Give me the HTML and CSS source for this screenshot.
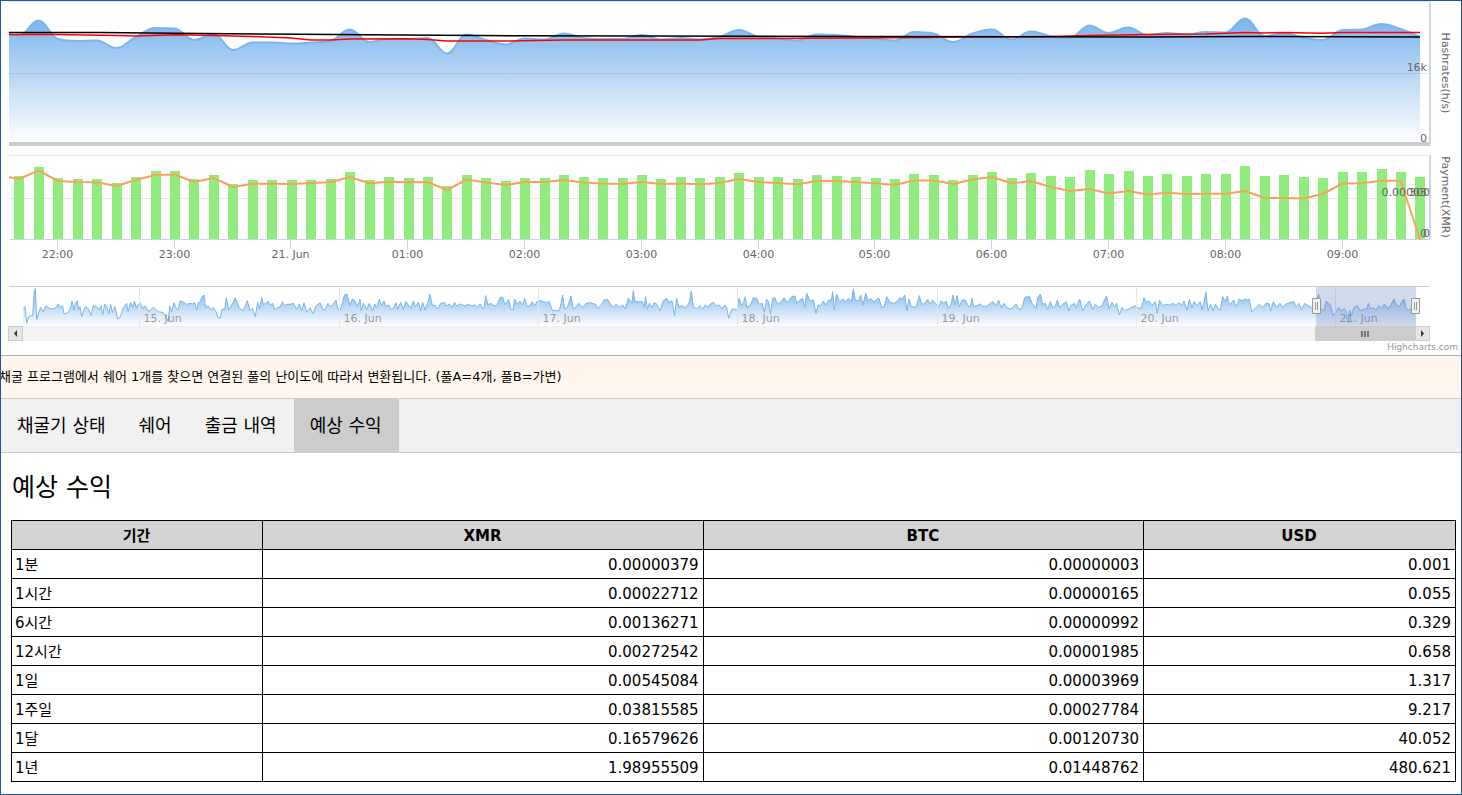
FILE: index.html
```html
<!DOCTYPE html>
<html lang="ko">
<head>
<meta charset="utf-8">
<title>예상 수익</title>
<link rel="stylesheet" href="styles.css">
</head>
<body>
<main class="page">
  <section class="chart">
    <svg class="plot" viewBox="1 1 1460 325" role="img" aria-label="Hashrates and payment">
      <defs>
        <linearGradient id="fade" x1="0" y1="0" x2="0" y2="1">
          <stop offset="0" stop-color="#7cb5ec"/>
          <stop offset="1" stop-color="#7cb5ec" stop-opacity="0"/>
        </linearGradient>
        <clipPath id="pane"><rect x="9" y="0" width="1421" height="241"/></clipPath>
      </defs>
      <path class="grid" d="M9 1.5H1430M9 73.5H1430M9 155.5H1430M9 198.5H1430"/>
      <g clip-path="url(#pane)">
        <path id="area" fill="url(#fade)"/>
        <path id="area-line" class="line blue"/>
        <path class="grid faint" d="M9 73.5H1420"/>
        <path id="avg-short" class="line red"/>
        <path id="avg-long" class="line black"/>
        <g id="bars" class="bars"></g>
      </g>
      <path class="separator" d="M9 144H1430"/>
      <path class="axis" d="M9 239.5H1430"/>
      <path class="axis thick" d="M1430 2V144M1430 155V239"/>
      <g clip-path="url(#pane)"><path id="payment" class="line orange"/></g>
      <g id="ticks" class="label middle"></g>
      <g class="label end">
        <text x="1427" y="71">16k</text>
        <text x="1427" y="142">0</text>
        <text x="1427" y="196">0.00003</text>
        <text x="1430" y="196">300</text>
        <text x="1427" y="237">0</text>
        <text x="1430" y="237">0</text>
      </g>
      <g class="label middle">
        <text transform="translate(1442 73) rotate(90)">Hashrates(h/s)</text>
        <text transform="translate(1442 197) rotate(90)">Payment(XMR)</text>
      </g>
      <path id="nav-area" fill="url(#fade)"/>
      <path id="nav-line" class="line thin"/>
      <g id="nav-days" class="label day"></g>
      <path class="nav-edge" d="M9 286.5H1430"/>
      <rect class="mask" x="1316" y="287" width="100" height="39"/>
      <g class="handle">
        <path d="M1312.5 298.5h8v15h-8zM1411.5 298.5h8v15h-8z"/>
        <path d="M1315.5 302v8M1317.5 302v8M1414.5 302v8M1416.5 302v8"/>
      </g>
    </svg>
    <div class="scrollbar">
      <button class="arrow" type="button" aria-label="Scroll left"><svg width="5" height="7" viewBox="0 0 5 7"><path d="M4 0v7L1 3.5z"/></svg></button>
      <div class="track"><div class="thumb"><i></i><i></i><i></i></div></div>
      <button class="arrow" type="button" aria-label="Scroll right"><svg width="5" height="7" viewBox="0 0 5 7"><path d="M1 0v7l3-3.5z"/></svg></button>
    </div>
    <a class="credits" href="#">Highcharts.com</a>
  </section>
  <p class="notice">채굴 프로그램에서 쉐어 1개를 찾으면 연결된 풀의 난이도에 따라서 변환됩니다. (풀A=4개, 풀B=가변)</p>
  <nav class="tabs">
    <button type="button">채굴기 상태</button>
    <button type="button">쉐어</button>
    <button type="button">출금 내역</button>
    <button type="button" class="active">예상 수익</button>
  </nav>
  <section class="content">
    <h3>예상 수익</h3>
    <table>
      <colgroup><col class="c-period"><col class="c-coin"><col class="c-coin"><col class="c-usd"></colgroup>
      <thead><tr><th>기간</th><th>XMR</th><th>BTC</th><th>USD</th></tr></thead>
      <tbody>
        <tr><td>1분</td><td>0.00000379</td><td>0.00000003</td><td>0.001</td></tr>
        <tr><td>1시간</td><td>0.00022712</td><td>0.00000165</td><td>0.055</td></tr>
        <tr><td>6시간</td><td>0.00136271</td><td>0.00000992</td><td>0.329</td></tr>
        <tr><td>12시간</td><td>0.00272542</td><td>0.00001985</td><td>0.658</td></tr>
        <tr><td>1일</td><td>0.00545084</td><td>0.00003969</td><td>1.317</td></tr>
        <tr><td>1주일</td><td>0.03815585</td><td>0.00027784</td><td>9.217</td></tr>
        <tr><td>1달</td><td>0.16579626</td><td>0.00120730</td><td>40.052</td></tr>
        <tr><td>1년</td><td>1.98955509</td><td>0.01448762</td><td>480.621</td></tr>
      </tbody>
    </table>
  </section>
</main>
<script src="chart.js"></script>
</body>
</html>
```
FILE: styles.css
```css
* { box-sizing: border-box; }

body {
  margin: 0;
  color: #000;
  font-family: "DejaVu Sans", "Noto Sans CJK KR", sans-serif;
  font-size: 15px;
}

.page {
  min-height: 100vh;
  border: 1px solid #2155a0;
  overflow: hidden;
}

.plot { display: block; width: 100%; height: auto; }
.grid { fill: none; stroke: #e6e6e6; }
.faint { stroke: #a5c5e6; }
.line { fill: none; stroke-width: 2; stroke-linejoin: round; }
.blue { stroke: #7cb5ec; }
.red { stroke: #f00; stroke-width: 1.5; }
.black { stroke: #000; stroke-width: 1.5; }
.orange { stroke: #f7a35c; }
.thin { stroke: #7cb5ec; stroke-width: 1; }
.bars { fill: #90ed7d; }
.separator { stroke: #ccc; stroke-width: 4; }
.axis { stroke: #ccd6eb; fill: none; }
.thick { stroke-width: 2; }
.nav-edge { stroke: #ccc; }
.mask { fill: #6685c2; fill-opacity: 0.3; }
.handle { fill: #f2f2f2; stroke: #999; }

.label { font-size: 11px; fill: #666; }
.middle { text-anchor: middle; }
.end { text-anchor: end; }
.day { fill: #999; }

.scrollbar {
  display: flex;
  height: 15px;
  margin: 0 31px 0 7px;
  background: #f2f2f2;
}

.arrow {
  flex: none;
  display: flex;
  align-items: center;
  justify-content: center;
  width: 15px;
  padding: 0;
  border: 1px solid #ccc;
  background: #e6e6e6;
}

.arrow path { fill: #333; }
.track { flex: 1; display: flex; justify-content: flex-end; }

.thumb {
  display: flex;
  align-items: center;
  justify-content: center;
  gap: 1px;
  width: 7.2%;
  background: #ccc;
}

.thumb i { width: 2px; height: 6px; background: #777; }

.credits {
  display: block;
  height: 14px;
  padding-right: 3px;
  color: #999;
  font-size: 9px;
  line-height: 12px;
  text-align: right;
  text-decoration: none;
}

.notice {
  margin: 0 0 0 -8px;
  padding: 0 6px;
  border-top: 1px solid #aaa;
  background: #fff7ed;
  font-size: 13px;
  line-height: 42px;
  white-space: nowrap;
}

.tabs {
  display: flex;
  border: solid #ccc;
  border-width: 1px 0;
  background: #f1f1f1;
}

.tabs button {
  padding: 0 17px 0 16px;
  border: 0;
  background: none;
  color: #000;
  font: 18px/53px "DejaVu Sans", "Noto Sans CJK KR", sans-serif;
}

.tabs .active { background: #ccc; }

.content { padding: 0 5px 0 10px; }

h3 {
  margin: 17px 0 15px 1px;
  font-size: 25px;
  font-weight: 400;
  line-height: 35px;
}

table {
  width: 100%;
  border-collapse: collapse;
  table-layout: fixed;
}

.c-period { width: 17.4%; }
.c-coin { width: 30.5%; }

th, td {
  height: 29px;
  padding: 2px 4px 0 3px;
  border: 1px solid #000;
  line-height: 26px;
  text-align: right;
}

th { background: #d3d3d3; text-align: center; }
td:first-child { text-align: left; }
```
FILE: chart.js
```js
const START = 19;
const STEP = 19.46;
const hash = [35.5,20.5,39,41,40.5,48,37,28,28.5,40,34,50,42.5,42.5,43.5,42.5,41,29.5,42,39,39,38,53.5,34.5,40,44.5,38.5,39.5,33.5,38,39,39,35,39.5,38,39.5,37,30,37,38.5,40.5,34.5,35,37,38.5,40.5,32,33.5,42,33.5,29.5,39.5,31.5,36,38,25.5,33,27.5,35,33,34.5,32,32.5,18.5,36,33.5,37.5,40,30,29.5,24,29,37];
const bars = [176,167,178,179,179,183,177,171,171,179,175,184,180,180,180,180,179,172,180,177,178,177,186,175,178,181,178,178,175,177,178,178,175,179,177,178,177,173,177,177,179,175,176,177,178,179,174,175,180,175,172,178,173,176,177,170,174,171,176,174,176,174,174,166,176,175,177,178,172,172,169,172,177];
const pay = [179,170.5,181,182,182.3,186,180,175,174.5,182,178,187,183.7,183.7,184,183,182.3,177,183.3,181.7,182.3,182,190,179.5,182.5,185,182,182,180,182.5,183.5,184,182,184,183.5,184.3,183,179,182,183,184.3,181,181,182,183.3,185,180.5,180.5,184,179.5,177,183.2,181,187,191,189,193.5,191,194.5,192.7,194,193.7,193.7,191,198,198,198.5,194,183.5,183.2,180.7,180.7,240];
const shortAvg = [[9,34.5],[58,34.5],[116,35.5],[136,36],[175,34.8],[214,35.5],[252,36.5],[291,38],[311,40],[330,40],[350,39],[408,38.7],[428,39.5],[447,41],[505,41],[564,40],[700,40],[719,38.6],[860,38],[970,37],[1050,36.5],[1089,35.6],[1147,34.5],[1206,34],[1245,32.6],[1264,33],[1284,32.5],[1322,33.3],[1342,32.5],[1420,32.4]];
const longAvg = [[9,32.5],[100,32.5],[175,33.3],[300,34.3],[400,35],[480,35.6],[640,36],[860,36.6],[1147,37],[1245,36.5],[1420,37]];

// Overview samples: x origin followed by x,y pairs in thirds of a unit.
const nav = [
  [0, "70,100 75,95 80,145 86,125 92,122 98,122 102,60 106,40 110,133 117,110 122,97 129,110 137,93 143,95 150,102 165,100 175,87 180,97 188,93 192,117 205,112 212,97 216,78 222,105 226,85 232,77 236,105 240,95 245,125 252,103 258,94 266,103 273,122 280,92 290,95 298,105 303,92 308,120 314,88 320,92 326,117 332,88 337,112 345,95 353,132 360,127 370,98 380,85 384,110 392,82 398,97 403,78 409,98 420,83 428,100 436,93 446,110 460,97 475,110 490,113 500,130 505,140 509,93 515,110 522,83 527,97 534,105 540,78 548,80 560,88 570,85 580,87 584,82 590,105 595,82 600,82 606,65 612,60 617,97 625,93 632,105 640,97 648,110 654,128 662,128 666,102 674,105 679,68 686,105 700,82 705,68 712,82 718,100 730,107 742,77 750,107 758,100 766,125 773,82 779,102 785,68 790,88 798,85 804,78 810,90 818,85 824,105 832,97 840,97 847,80 853,92 860,88 870,88 880,85 890,103 898,87 905,108 912,83 920,112 930,98 940,117 948,92 960,83 970,105 977,103 984,85 990,95 1000,87 1008,75 1013,100 1020,107 1028,82 1033,60 1041,57 1050,92 1057,72 1065,78 1072,95 1080,73 1084,108 1090,85 1100,105 1108,85 1118,108 1124,87 1130,97 1138,72 1144,92 1152,78 1158,95 1166,90 1172,103 1180,100 1188,83 1193,103 1202,82 1210,103 1218,80 1226,92 1232,100 1240,78 1246,95 1255,82 1262,107 1268,82 1275,105 1283,85 1290,58 1297,92 1305,90 1313,102 1322,85 1334,83 1340,93 1348,87 1356,98 1364,82 1370,93 1382,87 1395,93 1405,88 1416,93 1425,90 1433,97 1440,87"],
  [1440, "8,100 12,100 17,62 24,90 32,85 42,92 50,92 60,68 68,66 74,88 80,83 86,73 92,103 99,105 104,73 112,88 120,78 128,90 134,70 142,95 150,92 156,80 164,92 172,78 182,77 190,80 200,83 208,80 216,105 225,107 238,107 242,90 248,60 254,102 262,97 273,63 280,103 290,93 296,85 308,98 318,85 330,83 345,87 355,100 362,92 372,75 382,73 390,85 400,98 408,88 418,97 428,90 436,102 445,70 451,78 456,85 460,47 465,80 475,80 487,80 492,97 497,65 502,103 508,85 516,98 522,83 530,87 540,108 550,77 560,70 568,82 576,77 584,122 590,70 597,97 606,92 615,98 622,92 628,82 634,47 640,95 650,102 660,92 668,103 675,90 684,97 690,88 700,82 710,92 718,90 726,102 734,90 740,97 746,130 755,103 765,102 772,105 777,70 785,92 790,83 796,65 800,97 810,92 820,68 830,70 838,88 847,85 853,112 860,73 866,80 871,118 878,70 885,68 892,88 902,82 912,68 922,83 935,65 945,63 950,85 960,75 968,70 974,97 980,55 990,78 1000,75 1008,115 1014,90 1022,92 1030,78 1038,90 1046,75 1054,75 1058,50 1063,105 1070,57 1078,80 1090,72 1098,80 1105,70 1114,80 1120,42 1126,75 1136,77 1142,60 1149,90 1157,55 1165,78 1172,70 1182,82 1190,73 1197,70 1205,97 1212,97 1220,65 1230,82 1240,85 1250,80 1260,68 1268,72 1274,60 1281,107 1287,72 1294,95 1300,95 1308,97 1318,62 1325,88 1335,85 1343,72 1350,87 1358,75 1366,85 1375,97 1383,78 1392,85 1398,78 1405,100 1413,90 1419,60 1426,90 1431,62 1438,95 1446,75 1456,75 1464,92 1471,97"],
  [2916, "0,70 5,95 15,92 25,87 33,95 45,93 55,85 63,80 72,93 80,75 87,98 96,85 103,95 112,102 122,98 132,87 140,103 150,100 158,68 166,65 173,65 180,85 192,100 197,68 205,57 212,88 220,85 227,103 235,80 242,98 250,95 256,75 263,98 272,88 283,80 290,108 298,90 307,85 313,98 323,72 332,108 342,90 352,78 362,103 370,88 380,97 388,95 395,80 404,63 411,102 420,82 428,95 434,85 442,120 450,97 460,107 470,102 480,97 490,92 500,100 508,100 516,68 523,82 530,77 540,90 550,80 556,115 562,75 572,92 582,88 592,90 602,85 612,92 620,83 630,90 636,78 645,105 652,73 660,98 666,80 675,92 685,80 690,105 696,80 702,52 708,108 716,88 723,108 730,88 738,100 745,105 752,65 760,80 766,63 772,90 785,75 793,95 802,72 810,78 818,72 826,75 832,72 839,110 850,100 862,88 872,97 882,85 890,85 896,108 904,80 914,97 924,85 932,98 940,88 952,83 965,80 972,95 982,85 988,105 998,85 1008,92 1018,97 1028,95 1034,80 1040,57 1046,100 1056,108 1063,78 1068,85 1075,90 1083,122 1092,110 1100,97 1108,108 1116,100 1122,108 1127,142 1133,105 1138,122 1146,97 1156,92 1166,108 1174,102 1184,103 1189,85 1196,102 1204,98 1212,107 1220,92 1228,100 1236,88 1242,92 1248,102 1256,90 1266,72 1273,90 1282,95 1290,78 1296,72 1302,97 1310,107 1318,98 1326,70 1331,70"]
];

const $ = id => document.getElementById(id);
const polyline = pts => "M" + pts.map(p => p.join(" ")).join("L");
const at = values => values.map((y, i) => [START + STEP * i, y]);

// Smooth curve whose control points never overshoot the neighbouring values.
function spline(pts) {
  let d = `M${pts[0][0]} ${pts[0][1]}`;
  let out = pts[0];
  for (let i = 1; i < pts.length; i++) {
    const [x, y] = pts[i];
    let left = [x, y];
    let right = [x, y];
    if (i < pts.length - 1) {
      const [px, py] = pts[i - 1];
      const [nx, ny] = pts[i + 1];
      const lx = (1.5 * x + px) / 2.5;
      const rx = (1.5 * x + nx) / 2.5;
      let ly = (1.5 * y + py) / 2.5;
      let ry = (1.5 * y + ny) / 2.5;
      const shift = ((ry - ly) * (rx - x)) / (rx - lx) + y - ry;
      ly += shift;
      ry += shift;
      if (ly > py && ly > y) { ly = Math.max(py, y); ry = 2 * y - ly; }
      else if (ly < py && ly < y) { ly = Math.min(py, y); ry = 2 * y - ly; }
      if (ry > ny && ry > y) { ry = Math.max(ny, y); ly = 2 * y - ry; }
      else if (ry < ny && ry < y) { ry = Math.min(ny, y); ly = 2 * y - ry; }
      left = [lx, ly];
      right = [rx, ry];
    }
    d += `C${out.join(" ")} ${left.join(" ")} ${x} ${y}`;
    out = right;
  }
  return d;
}

const curve = spline([[START - STEP, 35], ...at(hash)]);
$("area-line").setAttribute("d", curve);
$("area").setAttribute("d", curve + `V142H${START - STEP}Z`);
$("avg-short").setAttribute("d", polyline(shortAvg));
$("avg-long").setAttribute("d", polyline(longAvg));
$("payment").setAttribute("d", polyline([[START - STEP, 175.5], ...at(pay)]));
$("bars").innerHTML = at(bars).map(([x, y]) =>
  `<rect x="${Math.round(x - 4.7)}" y="${y}" width="10" height="${239 - y}"/>`).join("");

const hours = ["22:00", "23:00", "21. Jun", "01:00", "02:00", "03:00", "04:00", "05:00", "06:00", "07:00", "08:00", "09:00"];
$("ticks").innerHTML = hours.map((t, i) => {
  const x = Math.floor(57.2 + i * 116.8) + 0.5;
  return `<path class="axis" d="M${x} 240v9"/><text x="${x}" y="258">${t}</text>`;
}).join("");

const overview = nav.flatMap(([origin, s]) => s.split(" ").map(p => {
  const [x, y] = p.split(",").map(Number);
  return [(origin + x) / 3, 275 + y / 3];
}));
$("nav-line").setAttribute("d", polyline(overview));
$("nav-area").setAttribute("d", polyline(overview) + "V326H23.3Z");
$("nav-days").innerHTML = [15, 16, 17, 18, 19, 20, 21].map((day, i) => {
  const x = Math.floor(139.8 + i * 199.3) + 0.5;
  return `<path class="grid" d="M${x} 287v39"/><text x="${x + 4}" y="322">${day}. Jun</text>`;
}).join("");
```
